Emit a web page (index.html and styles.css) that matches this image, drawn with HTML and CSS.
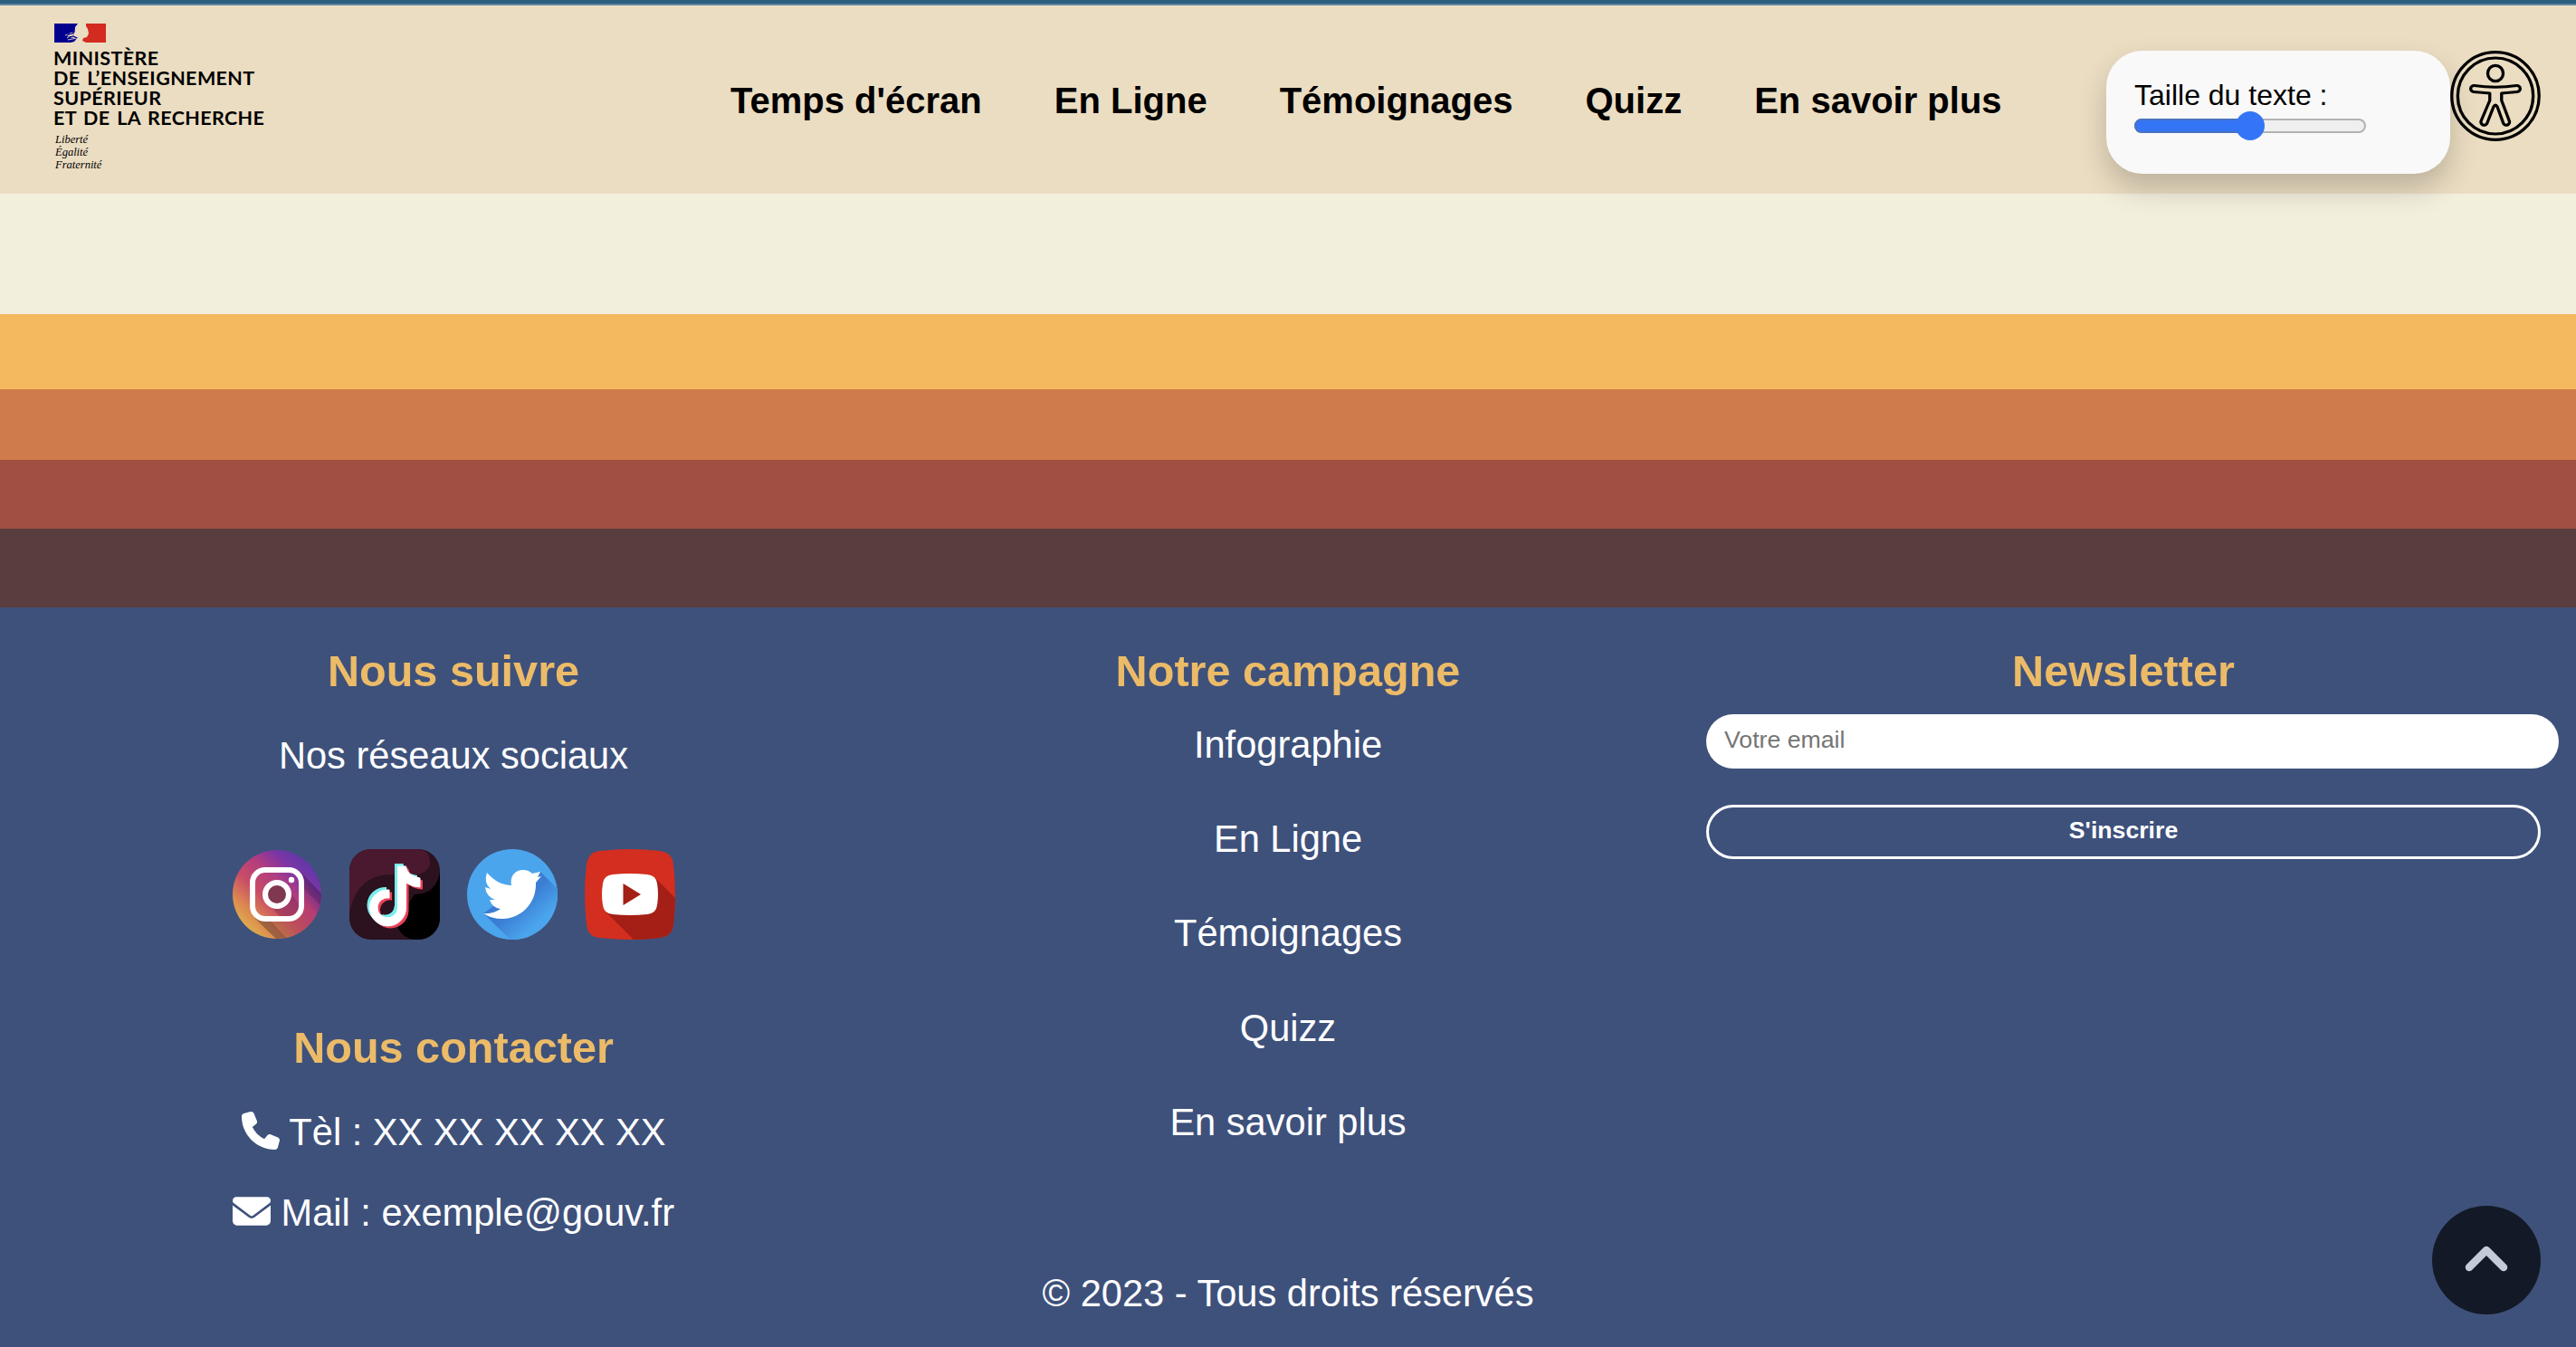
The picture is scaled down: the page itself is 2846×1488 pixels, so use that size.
FILE: index.html
```html
<!DOCTYPE html>
<html lang="fr">
<head>
<meta charset="utf-8">
<title>Ministère de l'Enseignement supérieur et de la Recherche</title>
<link rel="stylesheet" href="styles.css">
</head>
<body>
<header class="header">
  <a class="logo" href="#">
    <svg class="flag" viewBox="0 0 57 21">
      <path fill="#00008f" d="M0 0H26L23 4L22.500 10L19 11L14 14L21 16L26 15L22 20L18 21H0Z"/>
      <path fill="#d32b20" d="M35 0H57V21H35L31 19L32 16L36 15L38 11L37 6L35 3Z"/>
      <path fill="none" stroke="#ebddc2" stroke-width=".9" d="M12 13L20 10M14 16L22 11M15 18L25 16M17 13L18 15L22 14"/>
      <path fill="none" stroke="#00008f" stroke-width="1.200" d="M14 12L22 11M16 15L21 14L25 16"/>
    </svg>
    <span class="ministry"><span>MINISTÈRE</span><span>DE L’ENSEIGNEMENT</span><span>SUPÉRIEUR</span><span>ET DE LA RECHERCHE</span></span>
    <span class="motto">Liberté<br>Égalité<br>Fraternité</span>
  </a>
  <nav class="nav">
    <a href="#">Temps d'écran</a>
    <a href="#">En Ligne</a>
    <a href="#">Témoignages</a>
    <a href="#">Quizz</a>
    <a href="#">En savoir plus</a>
  </nav>
  <div class="access">
    <div class="panel">
      <label for="size">Taille du texte :</label>
      <div class="slider" id="size"><div class="fill"></div><div class="thumb"></div></div>
    </div>
    <svg class="person" viewBox="0 0 96 100" fill="none" stroke="#000" stroke-width="3.200" stroke-linejoin="round" preserveAspectRatio="none">
      <ellipse cx="48" cy="50" rx="46.300" ry="48.400"/>
      <ellipse cx="48" cy="50" rx="40" ry="42"/>
      <ellipse cx="48" cy="25" rx="8.200" ry="8.700"/>
      <path d="M25.500 38.500Q48 42 70.500 38.500A3.400 3.400 0 0 1 71 45.500L54.500 47V55L62.500 77A3.300 3.300 0 0 1 56.500 80.500L50 62Q48 58 46 62L39 80.500A3.300 3.300 0 0 1 33 77L42 55V47L25 45.500A3.400 3.400 0 0 1 25.500 38.500Z"/>
    </svg>
  </div>
</header>
<main>
  <div class="stripe cream"></div>
  <div class="stripe yellow"></div>
  <div class="stripe orange"></div>
  <div class="stripe red"></div>
  <div class="stripe brown"></div>
</main>
<footer class="footer">
  <div class="columns">
    <section class="contact">
      <h3>Nous suivre</h3>
      <p class="networks">Nos réseaux sociaux</p>
      <div class="social">
        <svg viewBox="0 0 100 100">
          <defs>
            <linearGradient id="ig" x1=".1" y1=".85" x2=".8" y2=".1"><stop offset="0" stop-color="#deb34d"/><stop offset=".18" stop-color="#dc8950"/><stop offset=".4" stop-color="#c84c67"/><stop offset=".62" stop-color="#b43e7c"/><stop offset=".83" stop-color="#7d35a5"/><stop offset="1" stop-color="#6038a8"/></linearGradient>
            <linearGradient id="igs" x1=".3" y1="1" x2="1" y2=".4"><stop offset="0" stop-color="#b9803f"/><stop offset=".4" stop-color="#bd4c5c"/><stop offset=".75" stop-color="#b53d72"/><stop offset="1" stop-color="#6a3090"/></linearGradient>
            <clipPath id="igc"><circle cx="50" cy="50" r="49"/></clipPath>
          </defs>
          <g clip-path="url(#igc)">
            <rect width="100" height="100" fill="url(#ig)"/>
            <path fill="url(#igs)" d="M25 76L50 100H100V50L76 25V65Q76 76 65 76Z"/>
            <path fill="#3a1230" opacity=".22" d="M39 60L55 76H74V60L59 41ZM25 76L50 100H62L40 76ZM76 25V40L100 64V50Z"/>
          </g>
          <rect x="23" y="23" width="54" height="54" rx="14" fill="none" stroke="#fff" stroke-width="6"/>
          <circle cx="50" cy="50" r="13" fill="#7f3850" stroke="#fff" stroke-width="6"/>
          <circle cx="66" cy="34" r="3.200" fill="#fff"/>
        </svg>
        <svg viewBox="0 0 100 100">
          <defs>
            <clipPath id="ttc"><rect width="100" height="100" rx="24"/></clipPath>
            <path id="note" d="M53 19H62.500Q64 30 78 32V42Q70 42 62.500 37V65A20 20 0 1 1 44 45V54A11 11 0 1 0 53 65Z" stroke-linejoin="round" stroke-width="1"/>
          </defs>
          <g clip-path="url(#ttc)">
            <rect width="100" height="100" fill="#2c111f"/>
            <path fill="#4a1930" d="M0 0H78Q89 3 89 14T75 28H45Q10 29 1 66L0 70Z"/>
            <path fill="#000" d="M100 25Q96 50 72 50L52 80Q55 100 76 100H100Z"/>
          </g>
          <use href="#note" x="-3" y="-3" fill="#78efed"/>
          <use href="#note" x="3" y="2.500" fill="#ea4359"/>
          <path fill="#78efed" d="M50 60V68Q49 74 43 75Q38 75 36 73Q40 78 47 75Q53 72 53 65V60Z"/>
          <use href="#note" fill="#fff" stroke="#fff"/>
          <path fill="#78efed" d="M50 16H53V65Q52 73 44 75Q38 75 36 72Q49 76 50 62Z"/>
        </svg>
        <svg viewBox="0 0 100 100">
          <defs><linearGradient id="tw" x1=".2" y1=".3" x2=".7" y2=".8"><stop offset=".45" stop-color="#3a7dd3"/><stop offset="1" stop-color="#4ba5ed"/></linearGradient><clipPath id="twc"><circle cx="50" cy="50" r="50"/></clipPath></defs>
          <circle cx="50" cy="50" r="50" fill="#4ba5ed"/>
          <path clip-path="url(#twc)" fill="url(#tw)" d="M81 25L100 44V100H48L18 71Z"/>
          <path fill="#fff" d="M22 26C30 35 39 40 49 40C47 30 53 23 62 23Q68 23 72 27L81 25L78 31L82 30L76 37C77 60 59 77 39 77Q27 77 18 71Q29 72 37 66Q28 65 25 56H31Q21 52 20 42L26 44Q18 37 22 26Z"/>
        </svg>
        <svg viewBox="0 0 100 100">
          <clipPath id="ytc"><path d="M17 2Q50-2 83 2Q97 4 98 17Q102 50 98 83Q97 96 83 98Q50 102 17 98Q3 97 2 83Q-2 50 2 17Q4 3 17 2Z"/></clipPath>
          <g clip-path="url(#ytc)"><rect width="100" height="100" fill="#d32e1f"/><path fill="#a41f16" d="M78 32L100 54V100H54L24 70Z"/></g>
          <path fill="#fff" d="M31 28Q50 26 69 28Q79 29 80 38Q82 50 80 62Q79 71 69 72Q50 74 31 72Q21 71 20 62Q18 50 20 38Q21 29 31 28Z"/>
          <path fill="#a41f16" d="M42.500 38L62 50L42.500 62Z"/>
        </svg>
      </div>
      <h3>Nous contacter</h3>
      <p class="line"><svg class="fa" viewBox="0 0 512 512"><path fill="#fff" d="M164.900 24.600c-7.700-18.600-28-28.500-47.400-23.200l-88 24C12.100 30.200 0 46 0 64c0 247.400 200.600 448 448 448c18 0 33.800-12.100 38.600-29.500l24-88c5.300-19.400-4.600-39.700-23.200-47.400l-96-40c-16.300-6.800-35.200-2.100-46.300 11.600L304.700 368C234.300 334.700 177.300 277.700 144 207.300L193.300 167c13.700-11.200 18.400-30 11.600-46.300l-40-96z"/></svg> Tèl : XX XX XX XX XX</p>
      <p class="line"><svg class="fa" viewBox="0 0 512 512"><path fill="#fff" d="M48 64C21.500 64 0 85.500 0 112c0 15.100 7.100 29.300 19.200 38.400L236.800 313.600c11.400 8.500 27 8.500 38.400 0L492.800 150.400c12.100-9.100 19.200-23.300 19.200-38.400c0-26.500-21.500-48-48-48H48zM0 176V384c0 35.300 28.700 64 64 64H448c35.300 0 64-28.700 64-64V176L294.400 339.200c-22.800 17.100-54 17.100-76.800 0L0 176z"/></svg> Mail : exemple@gouv.fr</p>
    </section>
    <section class="campaign">
      <h3>Notre campagne</h3>
      <ul>
        <li>Infographie</li>
        <li>En Ligne</li>
        <li>Témoignages</li>
        <li>Quizz</li>
        <li>En savoir plus</li>
      </ul>
    </section>
    <section class="newsletter">
      <h3>Newsletter</h3>
      <input type="email" placeholder="Votre email">
      <button type="button">S'inscrire</button>
    </section>
  </div>
  <p class="copyright">© 2023 - Tous droits réservés</p>
</footer>
<a class="top" href="#"><svg viewBox="0 0 120 120"><path d="M41 68L60 49L79 68" fill="none" stroke="#c5cad9" stroke-width="8.500" stroke-linecap="round" stroke-linejoin="round"/></svg></a>
</body>
</html>
```
FILE: styles.css
```css
* { box-sizing: border-box; }
body {
  margin: 0;
  height: 1488px;
  overflow: hidden;
  background: #3e517b;
  font-family: Helvetica, "Liberation Sans", Arial, sans-serif;
}
h3, p, ul { margin: 0; padding: 0; }
a { color: inherit; text-decoration: none; }
.header {
  height: 214px;
  border-top: 4px solid #2a5f7c;
  box-shadow: inset 0 2px #5c849b;
  background: #ebddc2;
  display: flex;
  position: relative;
}
.logo { width: 300px; margin-left: 59px; padding-top: 22px; color: #000; }
.flag { display: block; width: 57px; height: 21px; margin-left: 1px; }
.ministry {
  display: flex;
  flex-direction: column;
  align-items: flex-start;
  margin-top: 6px;
  font: 700 21.500px/22px Lato, sans-serif;
  letter-spacing: .4px;
  word-spacing: 2px;
  white-space: nowrap;
}
.motto {
  display: block;
  margin: 6px 0 0 2px;
  font: italic 12.500px/14px "Liberation Serif", serif;
}
.nav {
  display: flex;
  gap: 80px;
  margin-left: 448px;
  padding-top: 84px;
  font-size: 40px;
  line-height: 46px;
  font-weight: 700;
  white-space: nowrap;
}
.access { display: flex; margin: 52px 39px 0 auto; align-items: flex-start; }
.panel {
  width: 380px;
  height: 136px;
  padding: 31px;
  background: #f9f9f9;
  border-radius: 40px;
  box-shadow: 0 16px 32px rgba(0, 0, 0, .2);
  font-size: 32px;
  line-height: 36px;
}
.panel label { display: block; }
.slider {
  position: relative;
  width: 256px;
  height: 16px;
  margin-top: 8px;
  border: 2px solid #b2b2b2;
  border-radius: 8px;
  background: #efefef;
}
.fill { position: absolute; left: -2px; top: -2px; width: 128px; height: 16px; border: 2px solid #4a72c0; border-radius: 8px 0 0 8px; background: #3375f6; }
.thumb { position: absolute; left: 110px; top: -10px; width: 32px; height: 32px; border-radius: 50%; background: #3375f6; }
.person { position: relative; width: 100px; height: 100px; }
.cream { height: 133px; background: #f2efdd; }
.yellow { height: 83px; background: #f4b85f; }
.orange { height: 78px; background: #d07b4b; }
.red { height: 76px; background: #a14f42; }
.brown { height: 87px; background: #5a3d3f; }
.footer { color: #fff; font-size: 41.600px; line-height: 48px; text-align: center; }
.columns { display: grid; grid-template-columns: 1002px 842px 1002px; height: 661px; }
.footer h3 { color: #ecbb68; font-size: 48.600px; line-height: 55px; }
.contact { padding-top: 43px; }
.networks { margin-top: 42px; }
.social { display: flex; justify-content: center; gap: 30px; margin-top: 79px; }
.social svg { width: 100px; height: 100px; }
.social + h3 { margin-top: 92px; }
.line { margin-top: 42px; white-space: nowrap; }
.line + .line { margin-top: 41px; }
.fa { width: 42px; height: 42px; vertical-align: -5px; }
.campaign, .newsletter { padding-top: 43px; }
.campaign ul { list-style: none; margin-top: 30px; }
.campaign li { height: 104.200px; }
.newsletter { display: flex; flex-direction: column; align-items: flex-start; padding-left: 41px; }
.newsletter h3 { width: 922px; }
.newsletter input {
  width: 942px;
  height: 60px;
  margin-top: 20px;
  padding: 0 20px 3px;
  border: 0;
  border-radius: 30px;
  background: #fff;
  font: 26.667px "Liberation Sans", Arial, sans-serif;
}
.newsletter input::placeholder { color: #757575; }
.newsletter button {
  width: 922px;
  height: 60px;
  margin-top: 40px;
  padding: 0 0 3px;
  border: 3px solid #fff;
  border-radius: 30px;
  background: none;
  color: #fff;
  font: 700 26.667px "Liberation Sans", Arial, sans-serif;
}
.copyright { padding-top: 73px; }
.top {
  position: fixed;
  right: 39px;
  bottom: 36px;
  width: 120px;
  height: 120px;
  border-radius: 50%;
  background: #131926;
}
.top svg { display: block; width: 120px; height: 120px; }
```
